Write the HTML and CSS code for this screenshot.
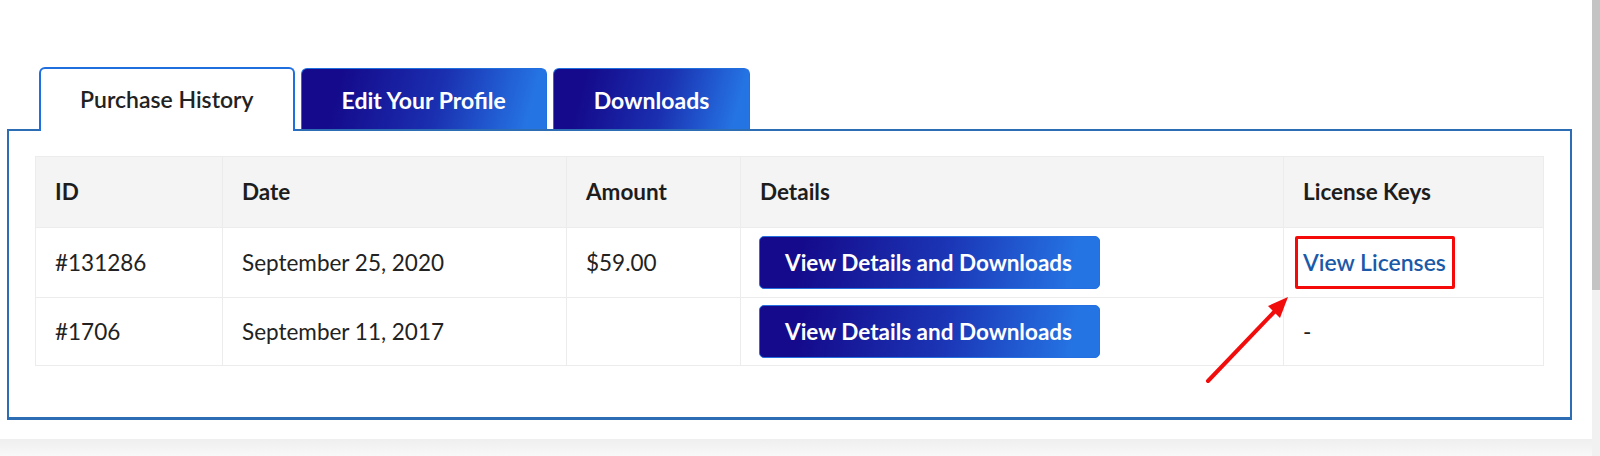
FILE: index.html
```html
<!DOCTYPE html>
<html lang="en">
<head>
    <meta charset="UTF-8">
    <meta name="viewport" content="width=device-width, initial-scale=1.0">
    <title>Purchase History</title>
    <link rel="stylesheet" href="styles.css">
</head>
<body>
    <div class="page">
        <div class="account">
            <div class="tabs">
                <a class="tab active" href="#history">Purchase History</a>
                <a class="tab" href="#profile">Edit Your Profile</a>
                <a class="tab" href="#downloads">Downloads</a>
            </div>

            <div class="panel" id="history">
                <table class="purchases">
                    <colgroup>
                        <col class="col-id">
                        <col class="col-date">
                        <col class="col-amount">
                        <col class="col-details">
                        <col class="col-keys">
                    </colgroup>
                    <thead>
                        <tr>
                            <th>ID</th>
                            <th>Date</th>
                            <th>Amount</th>
                            <th>Details</th>
                            <th>License Keys</th>
                        </tr>
                    </thead>
                    <tbody>
                        <tr>
                            <td>#131286</td>
                            <td>September 25, 2020</td>
                            <td>$59.00</td>
                            <td><a class="btn" href="#order-131286">View Details and Downloads</a></td>
                            <td><a class="license-link" href="#licenses-131286">View Licenses</a></td>
                        </tr>
                        <tr>
                            <td>#1706</td>
                            <td>September 11, 2017</td>
                            <td></td>
                            <td><a class="btn" href="#order-1706">View Details and Downloads</a></td>
                            <td>-</td>
                        </tr>
                    </tbody>
                </table>

                <!-- arrow pointing at the licenses link -->
                <svg class="pointer" width="110" height="100" viewBox="0 0 110 100">
                    <line x1="18" y1="91" x2="86" y2="20" stroke="#f20d0d" stroke-width="4" stroke-linecap="round"/>
                    <polygon points="98,7 78,16 90,28" fill="#f20d0d"/>
                </svg>
            </div>
        </div>
        <div class="footer"></div>
    </div>
    <div class="scrollbar"><div class="thumb"></div></div>
</body>
</html>
```

FILE: styles.css
```css
html, body { height: 100%; }
body { margin: 0; display: flex; font-family: Lato, "Open Sans", sans-serif; color: #222; background: #fff; overflow: hidden; }

.page { flex: 1; display: flex; flex-direction: column; }
.account { padding: 67px 20px 19px 7px; }

.tabs { display: flex; align-items: flex-end; gap: 6px; padding-left: 32px; }
.tab { display: block; height: 62px; line-height: 62px; padding: 0 40px; font-size: 23px; font-weight: 700; color: #fff; text-decoration: none; border: 1px solid #1f6fdf; border-bottom: 0; border-radius: 6px 6px 0 0; background: linear-gradient(105deg, #140a8b 15%, #1a2fb0 55%, #2574e4 92%); margin-bottom: -2px; position: relative; }
.tab.active { background: #fff; color: #222; font-weight: 600; border: 2px solid #1f6fdf; border-bottom: 0; line-height: 60px; padding: 0 39px; z-index: 2; }
.tab.active::after { content: ""; position: absolute; left: 0; right: 0; bottom: -2px; height: 2px; background: #fff; }

.panel { position: relative; border: 2px solid #2d6db4; border-bottom-width: 3px; padding: 25px 26px 51px 26px; }

.purchases { width: 1508px; table-layout: fixed; border-collapse: collapse; border: 1px solid #ececec; font-size: 22.5px; }
.col-id { width: 187px; }
.col-date { width: 344px; }
.col-amount { width: 174px; }
.col-details { width: 543px; }
.col-keys { width: 260px; }

.purchases th { background: #f4f4f4; font-weight: 700; text-align: left; padding: 20px 19px; line-height: 30px; border: 1px solid #ececec; color: #1d1d1d; }
.purchases td { padding: 8px 19px; line-height: 30px; height: 53px; border: 1px solid #ececec; vertical-align: middle; }
.purchases tbody tr:last-child td { padding-top: 7px; padding-bottom: 7px; }

.btn { display: inline-block; height: 53px; line-height: 51px; padding: 0 27px 0 25px; border-radius: 5px; border: 1px solid #2470e0; color: #fff; font-weight: 700; text-decoration: none; background: linear-gradient(100deg, #140a8b 12%, #1b36b6 55%, #2574e4 92%); box-sizing: border-box; margin-left: -1px; }

.license-link { display: inline-block; box-sizing: border-box; height: 53px; line-height: 47px; font-size: 23px; color: #1b5aa8; font-weight: 600; text-decoration: none; border: 3px solid #f50a0a; padding: 0 6px 0 5px; margin-left: -8px; border-radius: 2px; vertical-align: middle; }

.pointer { position: absolute; left: 1181px; top: 159px; }

.footer { flex: 1; background: linear-gradient(#efefef, #f8f8f8); }

.scrollbar { width: 8px; background: #f1f1f1; }
.scrollbar .thumb { height: 290px; background: #c4c4c4; }
```
